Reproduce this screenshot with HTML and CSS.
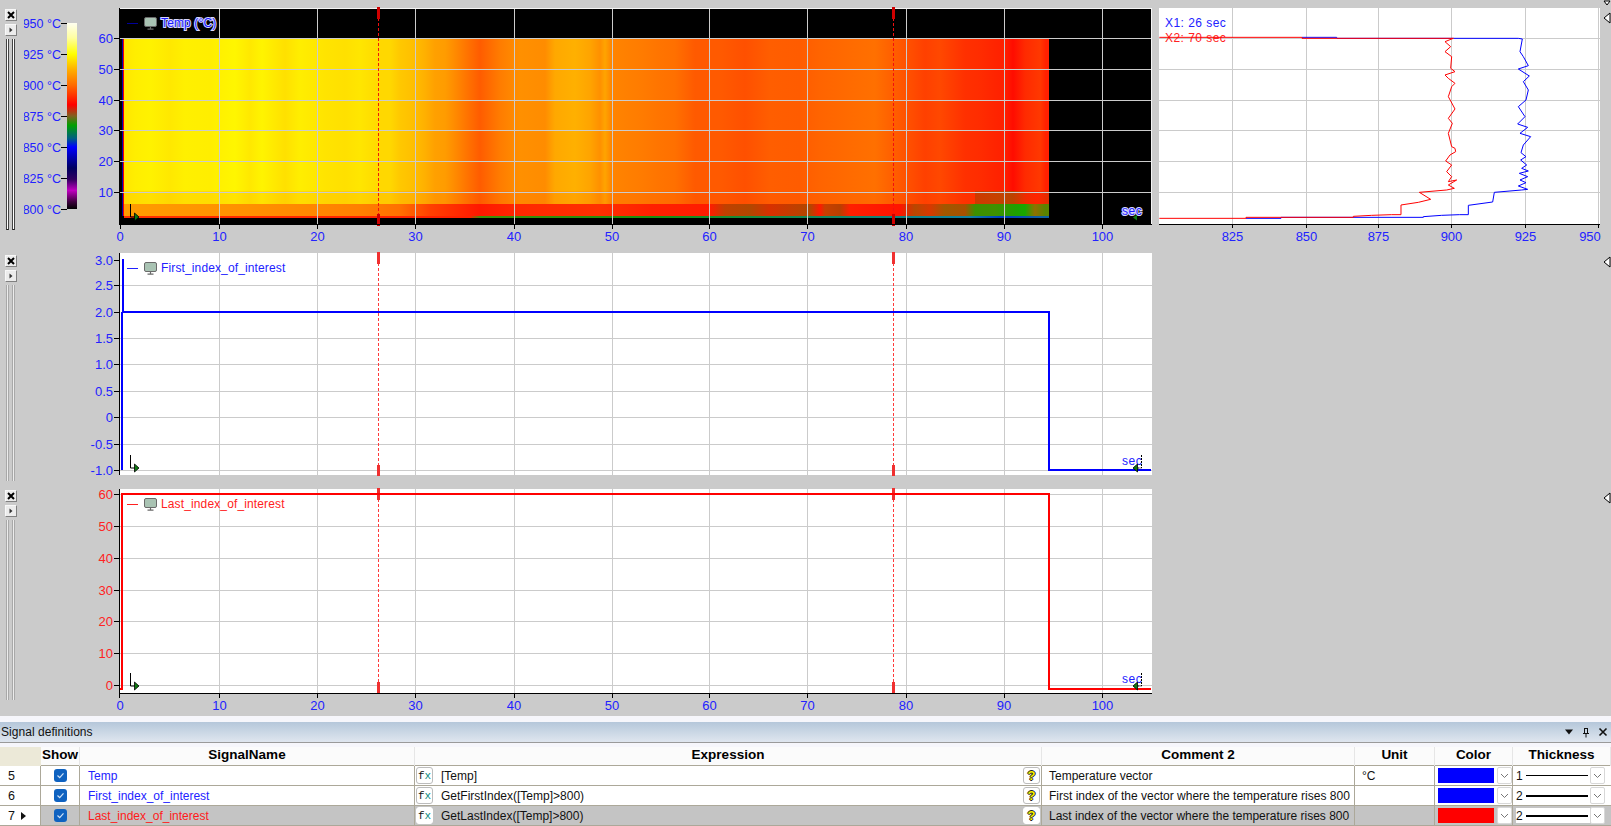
FILE: index.html
```html
<!DOCTYPE html>
<html lang="en">
<head>
<meta charset="utf-8">
<title>Signal definitions</title>
<link rel="stylesheet" href="styles.css">
</head>
<body>
<svg class="defs" width="0" height="0" aria-hidden="true">
  <defs>
    <symbol id="monitor" viewBox="0 0 13 13" overflow="visible">
      <rect x=".5" y=".5" width="12" height="9" rx="1.5" fill="#a9c3b3" stroke="#6a6a6a"/>
      <path d="M6.5 10v1.5M3.5 12.2h6" stroke="#6a6a6a" stroke-width="1.2" fill="none"/>
    </symbol>
    <symbol id="marker-left" viewBox="0 0 10 16" overflow="visible">
      <path d="M.5 0V13H5" stroke="#000" fill="none"/>
      <path d="M4.5 9L9 13L4.5 17Z" fill="#0e7a12" stroke="#000" stroke-width=".8"/>
    </symbol>
    <symbol id="marker-right" viewBox="0 0 10 16" overflow="visible">
      <path d="M9.5 0V13H5" stroke="#000" fill="none" stroke-dasharray="2 1"/>
      <path d="M5.5 9L1 13L5.5 17Z" fill="#0e7a12" stroke="#000" stroke-width=".8"/>
    </symbol>
    <linearGradient id="heat" gradientUnits="userSpaceOnUse" x1="50" y1="0" x2="1050" y2="0">
      <stop offset=".074" stop-color="#ffe600"/><stop offset=".085" stop-color="#ffee00"/><stop offset=".1" stop-color="#fff200"/><stop offset=".12" stop-color="#ffe800"/><stop offset=".135" stop-color="#fff000"/><stop offset=".16" stop-color="#ffee00"/><stop offset=".185" stop-color="#fff600"/><stop offset=".2" stop-color="#ffe800"/><stop offset=".212" stop-color="#fff400"/><stop offset=".235" stop-color="#ffe000"/><stop offset=".25" stop-color="#ffee00"/><stop offset=".275" stop-color="#ffe400"/><stop offset=".295" stop-color="#ffe000"/><stop offset=".31" stop-color="#ffe600"/><stop offset=".33" stop-color="#ffd800"/><stop offset=".34" stop-color="#ffd800"/><stop offset=".35" stop-color="#ffc800"/><stop offset=".362" stop-color="#ffc000"/><stop offset=".375" stop-color="#ffb000"/><stop offset=".385" stop-color="#ffa000"/><stop offset=".395" stop-color="#ff9c00"/><stop offset=".402" stop-color="#ff9000"/><stop offset=".42" stop-color="#ff6e00"/><stop offset=".43" stop-color="#ff5c00"/><stop offset=".45" stop-color="#ff7c00"/><stop offset=".47" stop-color="#ff9000"/><stop offset=".495" stop-color="#ff8c00"/><stop offset=".505" stop-color="#ffa800"/><stop offset=".525" stop-color="#ffb000"/><stop offset=".54" stop-color="#ffa400"/><stop offset=".55" stop-color="#ff9000"/><stop offset=".555" stop-color="#ffa400"/><stop offset=".562" stop-color="#ff8400"/><stop offset=".59" stop-color="#ff7c00"/><stop offset=".61" stop-color="#ff7400"/><stop offset=".625" stop-color="#ff7000"/><stop offset=".645" stop-color="#ff5a00"/><stop offset=".67" stop-color="#ff5a00"/><stop offset=".695" stop-color="#ff5000"/><stop offset=".72" stop-color="#ff5e00"/><stop offset=".75" stop-color="#ff5c00"/><stop offset=".77" stop-color="#ff6400"/><stop offset=".805" stop-color="#ff6c00"/><stop offset=".825" stop-color="#ff7000"/><stop offset=".85" stop-color="#ff5800"/><stop offset=".875" stop-color="#ff4000"/><stop offset=".89" stop-color="#ff4800"/><stop offset=".915" stop-color="#ff3000"/><stop offset=".93" stop-color="#ff2c00"/><stop offset=".945" stop-color="#ff2400"/><stop offset=".955" stop-color="#ff2000"/><stop offset=".963" stop-color="#ff0c00"/><stop offset=".975" stop-color="#ff2a00"/><stop offset=".99" stop-color="#ff3800"/><stop offset=".996" stop-color="#ff2000"/>
    </linearGradient>
    <linearGradient id="heat-low" gradientUnits="userSpaceOnUse" x1="50" y1="0" x2="1050" y2="0">
      <stop offset=".074" stop-color="#ff9c00"/><stop offset=".2" stop-color="#ff9000"/><stop offset=".31" stop-color="#ff8000"/><stop offset=".35" stop-color="#ff7000"/><stop offset=".38" stop-color="#ff4000"/><stop offset=".43" stop-color="#ff1800"/><stop offset=".47" stop-color="#ff2800"/><stop offset=".55" stop-color="#ff3000"/><stop offset=".6" stop-color="#ff2000"/><stop offset=".66" stop-color="#ff1c00"/><stop offset=".675" stop-color="#c04000"/><stop offset=".7" stop-color="#b04800"/><stop offset=".72" stop-color="#d83000"/><stop offset=".76" stop-color="#b04800"/><stop offset=".77" stop-color="#ff1a00"/><stop offset=".775" stop-color="#c84000"/><stop offset=".79" stop-color="#b84000"/><stop offset=".8" stop-color="#ff2000"/><stop offset=".85" stop-color="#ff1400"/><stop offset=".865" stop-color="#b84800"/><stop offset=".88" stop-color="#d83800"/><stop offset=".895" stop-color="#a05800"/><stop offset=".915" stop-color="#a85000"/><stop offset=".925" stop-color="#3c9000"/><stop offset=".945" stop-color="#409000"/><stop offset=".965" stop-color="#20a000"/><stop offset=".975" stop-color="#18a800"/><stop offset=".985" stop-color="#907000"/><stop offset=".995" stop-color="#5a8400"/>
    </linearGradient>
    <linearGradient id="heat-mid" gradientUnits="userSpaceOnUse" x1="975" y1="0" x2="1049" y2="0">
      <stop offset="0" stop-color="#c03c00"/><stop offset=".3" stop-color="#b84800"/><stop offset=".5" stop-color="#a85000"/><stop offset=".7" stop-color="#f02800"/><stop offset=".85" stop-color="#ff2000"/><stop offset="1" stop-color="#d83000"/>
    </linearGradient>
    <linearGradient id="heat-edge" gradientUnits="userSpaceOnUse" x1="50" y1="0" x2="1050" y2="0">
      <stop offset=".074" stop-color="#ff3000"/><stop offset=".42" stop-color="#ff2000"/><stop offset=".43" stop-color="#40900a"/><stop offset=".6" stop-color="#1c9010"/><stop offset=".92" stop-color="#1080a0"/><stop offset=".95" stop-color="#0040c0"/><stop offset=".99" stop-color="#1060a0"/>
    </linearGradient>
    <linearGradient id="scale" x1="0" y1="0" x2="0" y2="1">
      <stop offset="0" stop-color="#fffff0"/><stop offset=".08" stop-color="#ffffa0"/><stop offset=".167" stop-color="#ffff00"/><stop offset=".25" stop-color="#ffb000"/><stop offset=".333" stop-color="#ff6c00"/><stop offset=".44" stop-color="#ff0000"/><stop offset=".5" stop-color="#806020"/><stop offset=".55" stop-color="#00a000"/><stop offset=".62" stop-color="#006080"/><stop offset=".667" stop-color="#0000ff"/><stop offset=".78" stop-color="#000060"/><stop offset=".84" stop-color="#300060"/><stop offset=".9" stop-color="#c000c0"/><stop offset=".96" stop-color="#400040"/><stop offset="1" stop-color="#000"/>
    </linearGradient>
  </defs>
</svg>

<main class="app">
  <section class="plots">
    <div class="plot-row row-a">
      <div class="rail">
        <button class="rail-btn" type="button"><svg width="8" height="8" viewBox="0 0 8 8"><path d="M1 1L7 7M7 1L1 7" stroke="#000" stroke-width="2"/></svg></button>
        <button class="rail-btn" type="button"><svg width="8" height="8" viewBox="0 0 8 8"><path d="M2.5 1.5L5.5 4L2.5 6.5Z" fill="#333"/></svg></button>
        <div class="splitter dark"><span></span><span></span></div>
      </div>
      <svg class="chart" viewBox="24 0 1587 245" width="1587" height="245">
        <rect x="67" y="23" width="10" height="186" fill="url(#scale)"/>
        <path class="axis" d="M61 23.5H67M61 54.5H67M61 85.5H67M61 116.5H67M61 147.5H67M61 178.5H67M61 209.5H67"/>
        <g class="tick blue">
          <text x="61" y="28">950 °C</text><text x="61" y="59">925 °C</text><text x="61" y="90">900 °C</text><text x="61" y="121">875 °C</text><text x="61" y="152">850 °C</text><text x="61" y="183">825 °C</text><text x="61" y="214">800 °C</text>
        </g>

        <rect x="120" y="8" width="1032" height="216" fill="#000"/>
        <rect x="124" y="38" width="925" height="153" fill="url(#heat)"/>
        <rect x="124" y="191" width="925" height="13" fill="url(#heat)"/>
        <rect x="124" y="191" width="925" height="13" fill="#ff4000" opacity=".1"/>
        <rect x="975" y="191" width="74" height="13" fill="url(#heat-mid)" opacity=".8"/>
        <rect x="124" y="204" width="925" height="12" fill="url(#heat-low)"/>
        <rect x="124" y="216" width="925" height="2" fill="url(#heat-edge)"/>
        <rect x="122" y="38" width="1" height="178" fill="#0000a8"/>
        <rect x="123" y="38" width="1" height="178" fill="#f00000"/>
        <path class="grid" d="M219.5 8V224M317.5 8V224M415.5 8V224M514.5 8V224M612.5 8V224M709.5 8V224M807.5 8V224M906.5 8V224M1004.5 8V224M1102.5 8V224M120 38.5H1152M120 69.5H1152M120 100.5H1152M120 130.5H1152M120 161.5H1152M120 192.5H1152"/>
        <path class="edge" d="M120 8.5H1152M1151.5 8V224"/>
        <path class="cursor dark-cursor" d="M378.5 8V224M893.5 8V224"/>
        <path class="handle dark-handle" d="M378.5 7V19M378.5 214V226M893.5 7V19M893.5 214V226"/>
        <path class="axis" d="M119.5 8V225M114 38.5H119M114 69.5H119M114 100.5H119M114 130.5H119M114 161.5H119M114 192.5H119M119 224.5H1152M120.5 224V229M219.5 224V229M317.5 224V229M415.5 224V229M514.5 224V229M612.5 224V229M709.5 224V229M807.5 224V229M906.5 224V229M1004.5 224V229M1102.5 224V229"/>
        <g class="tick blue">
          <text x="113" y="43">60</text><text x="113" y="74">50</text><text x="113" y="105">40</text><text x="113" y="135">30</text><text x="113" y="166">20</text><text x="113" y="197">10</text>
        </g>
        <g class="tick-x blue">
          <text x="120" y="241">0</text><text x="219.5" y="241">10</text><text x="317.5" y="241">20</text><text x="415.5" y="241">30</text><text x="514" y="241">40</text><text x="612" y="241">50</text><text x="709.5" y="241">60</text><text x="807.5" y="241">70</text><text x="906" y="241">80</text><text x="1004" y="241">90</text><text x="1102.5" y="241">100</text>
        </g>
        <path d="M127 23.5H138" stroke="#00009a"/>
        <use href="#monitor" x="144" y="17" width="13" height="13"/>
        <text class="legend halo" x="161" y="27">Temp (°C)</text>
        <text class="sec halo" x="1122" y="215">sec</text>
        <use href="#marker-left" x="130" y="204" width="10" height="16"/>
        <path d="M1137 214.5L1133 217.5L1137 220.5Z" fill="#0e7a12"/>

        <rect x="1159" y="8" width="441" height="216" fill="#fff"/>
        <path class="grid" d="M1232.5 8V224M1306.5 8V224M1378.5 8V224M1451.5 8V224M1525.5 8V224M1598.5 8V224M1159 38.5H1600M1159 69.5H1600M1159 100.5H1600M1159 130.5H1600M1159 161.5H1600M1159 192.5H1600"/>
        <path class="axis" d="M1159 224.5H1600M1232.5 224V228M1306.5 224V228M1378.5 224V228M1451.5 224V228M1525.5 224V228M1598.5 224V228"/>
        <g class="tick-x blue">
          <text x="1232.5" y="241">825</text><text x="1306.5" y="241">850</text><text x="1378.5" y="241">875</text><text x="1451.5" y="241">900</text><text x="1525.5" y="241">925</text><text x="1590" y="241">950</text>
        </g>
        <text class="cursor-label blue" x="1165" y="27">X1: 26 sec</text>
        <text class="cursor-label red" x="1165" y="42">X2: 70 sec</text>
        <g transform="translate(1140 0) scale(.33333)">
          <polyline class="trace-blue" points="318,655 423,655 423,652 850,652 850,650 905,646 958,644 985,644 985,616 1058,606 1063,577 1110,573 1145,570 1163,568 1135,558 1158,548 1140,540 1163,530 1138,520 1165,513 1145,505 1160,495 1142,480 1158,470 1143,458 1150,435 1172,410 1140,400 1163,382 1133,372 1155,350 1135,320 1158,300 1165,270 1150,245 1168,228 1135,207 1165,197 1150,170 1140,155 1147,117 1135,115 940,115 590,115 590,112 486,112"/>
          <polyline class="trace-red" points="58,655 318,655 318,652 640,652 640,649 695,646 755,644 783,644 783,615 835,607 872,598 838,577 885,573 920,570 943,565 925,555 950,540 925,545 935,530 920,515 935,495 917,483 930,465 947,455 945,445 935,440 925,400 937,370 925,355 945,327 925,290 935,260 945,250 925,235 915,225 945,215 932,205 935,170 915,155 932,140 915,125 940,115 590,115 486,115 486,112 58,112"/>
        </g>
        <path class="corner" d="M1604 1L1610 1L1607 5Z"/>
        <path class="corner" d="M1610 13V23L1604 18Z"/>
      </svg>
    </div>

    <div class="plot-row row-b">
      <div class="rail">
        <button class="rail-btn" type="button"><svg width="8" height="8" viewBox="0 0 8 8"><path d="M1 1L7 7M7 1L1 7" stroke="#000" stroke-width="2"/></svg></button>
        <button class="rail-btn" type="button"><svg width="8" height="8" viewBox="0 0 8 8"><path d="M2.5 1.5L5.5 4L2.5 6.5Z" fill="#333"/></svg></button>
        <div class="splitter"><span></span><span></span></div>
      </div>
      <svg class="chart" viewBox="24 245 1587 240" width="1587" height="240">
        <rect x="120" y="253" width="1032" height="222" fill="#fff"/>
        <path class="grid" d="M219.5 253V475M317.5 253V475M415.5 253V475M514.5 253V475M612.5 253V475M709.5 253V475M807.5 253V475M906.5 253V475M1004.5 253V475M1102.5 253V475M120 285.5H1152M120 338.5H1152M120 364.5H1152M120 391.5H1152M120 417.5H1152M120 444.5H1152M120 470.5H1152"/>
        <path class="cursor" d="M378.5 253V475M893.5 253V475"/>
        <path class="handle" d="M378.5 252V264M378.5 465V476M893.5 252V264M893.5 465V476"/>
        <path class="axis" d="M119.5 253V475M114 260.5H119M114 285.5H119M114 312.5H119M114 338.5H119M114 364.5H119M114 391.5H119M114 417.5H119M114 444.5H119M114 470.5H119"/>
        <g class="tick blue">
          <text x="113" y="265">3.0</text><text x="113" y="290">2.5</text><text x="113" y="317">2.0</text><text x="113" y="343">1.5</text><text x="113" y="369">1.0</text><text x="113" y="396">0.5</text><text x="113" y="422">0</text><text x="113" y="449">-0.5</text><text x="113" y="475">-1.0</text>
        </g>
        <path class="step-blue" d="M123 259V312H1049V470H1151"/>
        <path class="step-blue" d="M121.5 470V312"/>
        <path d="M127 268.5H138" stroke="#2020ff"/>
        <use href="#monitor" x="144" y="262" width="13" height="13"/>
        <text class="legend blue" x="161" y="272">First_index_of_interest</text>
        <text class="sec blue" x="1122" y="465">sec</text>
        <use href="#marker-left" x="130" y="455" width="10" height="16"/>
        <use href="#marker-right" x="1132" y="455" width="10" height="16"/>
        <path class="corner" d="M1610 257V267L1604 262Z"/>
      </svg>
    </div>

    <div class="plot-row row-c">
      <div class="rail">
        <button class="rail-btn" type="button"><svg width="8" height="8" viewBox="0 0 8 8"><path d="M1 1L7 7M7 1L1 7" stroke="#000" stroke-width="2"/></svg></button>
        <button class="rail-btn" type="button"><svg width="8" height="8" viewBox="0 0 8 8"><path d="M2.5 1.5L5.5 4L2.5 6.5Z" fill="#333"/></svg></button>
        <div class="splitter"><span></span><span></span></div>
      </div>
      <svg class="chart" viewBox="24 485 1587 231" width="1587" height="231">
        <rect x="120" y="489" width="1032" height="204" fill="#fff"/>
        <path class="grid" d="M219.5 489V693M317.5 489V693M415.5 489V693M514.5 489V693M612.5 489V693M709.5 489V693M807.5 489V693M906.5 489V693M1004.5 489V693M1102.5 489V693M120 494.5H1152M120 526.5H1152M120 558.5H1152M120 590.5H1152M120 621.5H1152M120 653.5H1152M120 685.5H1152"/>
        <path class="cursor" d="M378.5 489V693M893.5 489V693"/>
        <path class="handle" d="M378.5 488V500M378.5 682V694M893.5 488V500M893.5 682V694"/>
        <path class="step-red" d="M120 689H122V494H1049V688.5H1151"/>
        <path class="axis" d="M119.5 489V698M114 494.5H119M114 526.5H119M114 558.5H119M114 590.5H119M114 621.5H119M114 653.5H119M114 685.5H119M119 693.5H1152M219.5 693V698M317.5 693V698M415.5 693V698M514.5 693V698M612.5 693V698M709.5 693V698M807.5 693V698M906.5 693V698M1004.5 693V698M1102.5 693V698"/>
        <g class="tick red">
          <text x="113" y="499">60</text><text x="113" y="531">50</text><text x="113" y="563">40</text><text x="113" y="595">30</text><text x="113" y="626">20</text><text x="113" y="658">10</text><text x="113" y="690">0</text>
        </g>
        <g class="tick-x blue">
          <text x="120" y="710">0</text><text x="219.5" y="710">10</text><text x="317.5" y="710">20</text><text x="415.5" y="710">30</text><text x="514" y="710">40</text><text x="612" y="710">50</text><text x="709.5" y="710">60</text><text x="807.5" y="710">70</text><text x="906" y="710">80</text><text x="1004" y="710">90</text><text x="1102.5" y="710">100</text>
        </g>
        <path d="M127 504.5H138" stroke="#ff2020"/>
        <use href="#monitor" x="144" y="498" width="13" height="13"/>
        <text class="legend red" x="161" y="508">Last_index_of_interest</text>
        <text class="sec blue" x="1122" y="683">sec</text>
        <use href="#marker-left" x="130" y="673" width="10" height="16"/>
        <use href="#marker-right" x="1132" y="673" width="10" height="16"/>
        <path class="corner" d="M1610 493V503L1604 498Z"/>
      </svg>
    </div>
  </section>

  <section class="panel">
    <header class="panel-title">
      <span class="panel-name">Signal definitions</span>
      <span class="panel-tools">
        <svg width="10" height="8" viewBox="0 0 10 8"><path d="M1 1.5H9L5 6.5Z" fill="#111"/></svg>
        <svg width="10" height="11" viewBox="0 0 10 11"><path d="M3 1.5H7M3.5 1.5V6.5H6.5V1.5M2 6.5H8M5 6.5V10.5" stroke="#111" fill="none"/></svg>
        <svg width="10" height="10" viewBox="0 0 10 10"><path d="M1.5 1.5L8.5 8.5M8.5 1.5L1.5 8.5" stroke="#111" stroke-width="1.6"/></svg>
      </span>
    </header>
    <div class="table">
      <div class="tr head">
        <div class="th corner-cell"></div>
        <div class="th">Show</div>
        <div class="th">SignalName</div>
        <div class="th">Expression</div>
        <div class="th">Comment 2</div>
        <div class="th">Unit</div>
        <div class="th">Color</div>
        <div class="th">Thickness</div>
      </div>

      <div class="tr">
        <div class="td idx">5</div>
        <div class="td show"><span class="check"><svg width="9" height="9" viewBox="0 0 9 9"><path d="M1.5 4.5L3.7 6.7L7.5 2.3" stroke="#cfe2f7" fill="none" stroke-width="1.2"/></svg></span></div>
        <div class="td name blue-text">Temp</div>
        <div class="td expr"><span class="fx"><i>f</i><b>x</b></span><span class="expr-text">[Temp]</span><span class="help">?</span></div>
        <div class="td comment">Temperature vector</div>
        <div class="td unit">°C</div>
        <div class="td color"><span class="swatch swatch-blue"></span><span class="drop"><svg width="9" height="6" viewBox="0 0 9 6"><path d="M1 1L4.5 4.5L8 1" stroke="#777" fill="none"/></svg></span></div>
        <div class="td thick"><span class="field"><span class="num">1</span><span class="line line-1"></span></span><span class="drop"><svg width="9" height="6" viewBox="0 0 9 6"><path d="M1 1L4.5 4.5L8 1" stroke="#777" fill="none"/></svg></span></div>
      </div>

      <div class="tr">
        <div class="td idx">6</div>
        <div class="td show"><span class="check"><svg width="9" height="9" viewBox="0 0 9 9"><path d="M1.5 4.5L3.7 6.7L7.5 2.3" stroke="#cfe2f7" fill="none" stroke-width="1.2"/></svg></span></div>
        <div class="td name blue-text">First_index_of_interest</div>
        <div class="td expr"><span class="fx"><i>f</i><b>x</b></span><span class="expr-text">GetFirstIndex([Temp]&gt;800)</span><span class="help">?</span></div>
        <div class="td comment">First index of the vector where the temperature rises 800</div>
        <div class="td unit"></div>
        <div class="td color"><span class="swatch swatch-blue"></span><span class="drop"><svg width="9" height="6" viewBox="0 0 9 6"><path d="M1 1L4.5 4.5L8 1" stroke="#777" fill="none"/></svg></span></div>
        <div class="td thick"><span class="field"><span class="num">2</span><span class="line line-2"></span></span><span class="drop"><svg width="9" height="6" viewBox="0 0 9 6"><path d="M1 1L4.5 4.5L8 1" stroke="#777" fill="none"/></svg></span></div>
      </div>

      <div class="tr selected">
        <div class="td idx">7<svg class="row-arrow" width="5" height="8" viewBox="0 0 5 8"><path d="M0 0L5 4L0 8Z" fill="#111"/></svg></div>
        <div class="td show"><span class="check"><svg width="9" height="9" viewBox="0 0 9 9"><path d="M1.5 4.5L3.7 6.7L7.5 2.3" stroke="#cfe2f7" fill="none" stroke-width="1.2"/></svg></span></div>
        <div class="td name red-text">Last_index_of_interest</div>
        <div class="td expr"><span class="fx"><i>f</i><b>x</b></span><span class="expr-text">GetLastIndex([Temp]&gt;800)</span><span class="help">?</span></div>
        <div class="td comment">Last index of the vector where the temperature rises 800</div>
        <div class="td unit"></div>
        <div class="td color"><span class="swatch swatch-red"></span><span class="drop"><svg width="9" height="6" viewBox="0 0 9 6"><path d="M1 1L4.5 4.5L8 1" stroke="#777" fill="none"/></svg></span></div>
        <div class="td thick"><span class="field"><span class="num">2</span><span class="line line-2"></span></span><span class="drop"><svg width="9" height="6" viewBox="0 0 9 6"><path d="M1 1L4.5 4.5L8 1" stroke="#777" fill="none"/></svg></span></div>
      </div>
    </div>
  </section>
</main>
</body>
</html>
```
FILE: styles.css
```css
* { box-sizing: border-box; }
html, body { margin: 0; padding: 0; }
body { width: 1611px; height: 826px; overflow: hidden; font-family: "Liberation Sans", Arial, sans-serif; background: #cbcbcb; }
.defs { display: block; height: 0; }
.app { display: flex; flex-direction: column; width: 1611px; height: 826px; }

.plots { display: flex; flex-direction: column; height: 716px; background: #cbcbcb; flex: none; }
.plot-row { display: flex; flex: none; }
.row-a { height: 245px; }
.row-b { height: 240px; }
.row-c { height: 231px; }
.chart { display: block; flex: none; }

.rail { width: 24px; flex: none; display: flex; flex-direction: column; gap: 3px; padding-left: 5px; }
.row-a .rail { padding-top: 9px; padding-bottom: 15px; }
.row-b .rail { padding-top: 10px; padding-bottom: 4px; }
.row-c .rail { padding-top: 5px; padding-bottom: 16px; }
.rail-btn { width: 12px; height: 12px; padding: 0; display: flex; align-items: center; justify-content: center; background: #ececec; border: 1px solid; border-color: #f8f8f8 #808080 #808080 #f8f8f8; }
.splitter { flex: 1; display: flex; gap: 3px; padding-left: 1px; }
.splitter span { width: 3px; background: #ececec; border-left: 1px solid #a8a8a8; border-right: 1px solid #a8a8a8; }
.splitter.dark span { background: #fff; border-color: #444; border-bottom: 1px solid #222; }

.axis { stroke: #000; stroke-width: 1; fill: none; shape-rendering: crispEdges; }
.grid { stroke: #cbcbcb; stroke-width: 1; fill: none; shape-rendering: crispEdges; }
.edge { stroke: #f4f4f4; stroke-width: 1; fill: none; shape-rendering: crispEdges; }
.cursor { stroke: #ff3a3a; stroke-width: 1; stroke-dasharray: 3 2; fill: none; shape-rendering: crispEdges; }
.cursor.dark-cursor { stroke: #f01010; }
.handle { stroke: #f03030; stroke-width: 3; fill: none; }
.handle.dark-handle { stroke: #d00000; }
.step-blue { stroke: #0000ff; stroke-width: 2; fill: none; shape-rendering: crispEdges; }
.step-red { stroke: #ff0000; stroke-width: 2; fill: none; shape-rendering: crispEdges; }
.trace-blue { stroke: #0000ff; stroke-width: 3; fill: none; }
.trace-red { stroke: #ff0000; stroke-width: 3; fill: none; }
.corner { fill: #fff; stroke: #000; stroke-width: 1; }

.tick text { font-size: 13px; text-anchor: end; }
.tick-x text { font-size: 13px; text-anchor: middle; }
.row-a .tick:first-of-type text { font-size: 12.5px; }
.blue { fill: #2222ff; }
.red { fill: #ff2222; }
.legend { font-size: 12px; letter-spacing: .13px; }
.halo { fill: #1a1aff; stroke: #d8d8ff; stroke-width: 2px; paint-order: stroke; }
.sec { font-size: 12px; letter-spacing: .6px; }
.cursor-label { font-size: 12px; letter-spacing: .45px; }

.panel { flex: 1; display: flex; flex-direction: column; background: #f6f6fb; padding-top: 6px; color: #111; }
.panel-title { height: 21px; flex: none; display: flex; align-items: center; justify-content: space-between; padding: 0 3px 0 1px; background: linear-gradient(#b5c7da, #dfe6ef); border-bottom: 1px solid #9a9a9a; font-size: 12px; }
.panel-name { letter-spacing: .05px; }
.panel-tools { display: flex; align-items: center; gap: 7px; }

.table { display: flex; flex-direction: column; margin-top: 4px; }
.tr { display: grid; grid-template-columns: 41px 39px 335px 627px 313px 80px 78px 98px; height: 20px; background: #fff; border-bottom: 1px solid #aca899; font-size: 12px; }
.tr.head { height: 19px; background: #fbfbfb; }
.th { display: flex; align-items: center; justify-content: center; padding-bottom: 5px; font-size: 13.5px; font-weight: 700; border-right: 1px solid #e6e6e6; color: #000; }
.corner-cell { background: #ece9d8; border-right: 0; }
.td { display: flex; align-items: center; min-width: 0; white-space: nowrap; overflow: hidden; border-right: 1px solid #aca899; }
.idx { padding-left: 8px; gap: 6px; background: #fff; font-size: 12.5px; }
.show { justify-content: center; }
.check { width: 13px; height: 13px; border-radius: 3px; background: #0f62c0; display: flex; align-items: center; justify-content: center; }
.name { padding-left: 8px; }
.blue-text { color: #2222ff; }
.red-text { color: #ff1a1a; }
.expr { padding-left: 1px; padding-right: 1px; }
.fx { width: 17px; height: 17px; flex: none; display: flex; align-items: center; justify-content: center; border: 1px solid #bcbcbc; border-radius: 3px; background: #fff; font-family: "Liberation Mono", monospace; font-size: 11px; }
.fx i { font-style: normal; color: #111; }
.fx b { font-weight: 400; color: #0d8a80; }
.expr-text { flex: 1; padding-left: 8px; }
.help { width: 17px; height: 17px; flex: none; display: flex; align-items: center; justify-content: center; border: 1px solid #bcbcbc; border-radius: 3px; background: #fff; color: #f4f000; font-weight: 700; font-size: 13px; text-shadow: -1px 0 #222, 1px 0 #222, 0 -1px #222, 0 1px #222; }
.comment { padding-left: 7px; }
.unit { padding-left: 7px; }
.color { padding-left: 3px; gap: 3px; }
.swatch { width: 56px; height: 15px; flex: none; }
.swatch-blue { background: #0000ff; }
.swatch-red { background: #ff0000; }
.drop { width: 15px; height: 17px; flex: none; display: flex; align-items: center; justify-content: center; background: #fff; border: 1px solid #d8d8d8; border-radius: 2px; }
.thick { padding-left: 3px; border-right: 0; }
.field { display: flex; align-items: center; height: 15px; padding-right: 2px; }
.num { width: 10px; flex: none; font-size: 12px; }
.line { width: 62px; flex: none; background: #000; }
.line-1 { height: 1px; }
.line-2 { height: 2px; }
.selected .td { background: #c4c4c4; }
.selected .idx { background: #fff; }
.selected .fx, .selected .help { border-color: #fff; }
.selected .field { background: #fff; }
.selected { background: #c4c4c4; }
```
